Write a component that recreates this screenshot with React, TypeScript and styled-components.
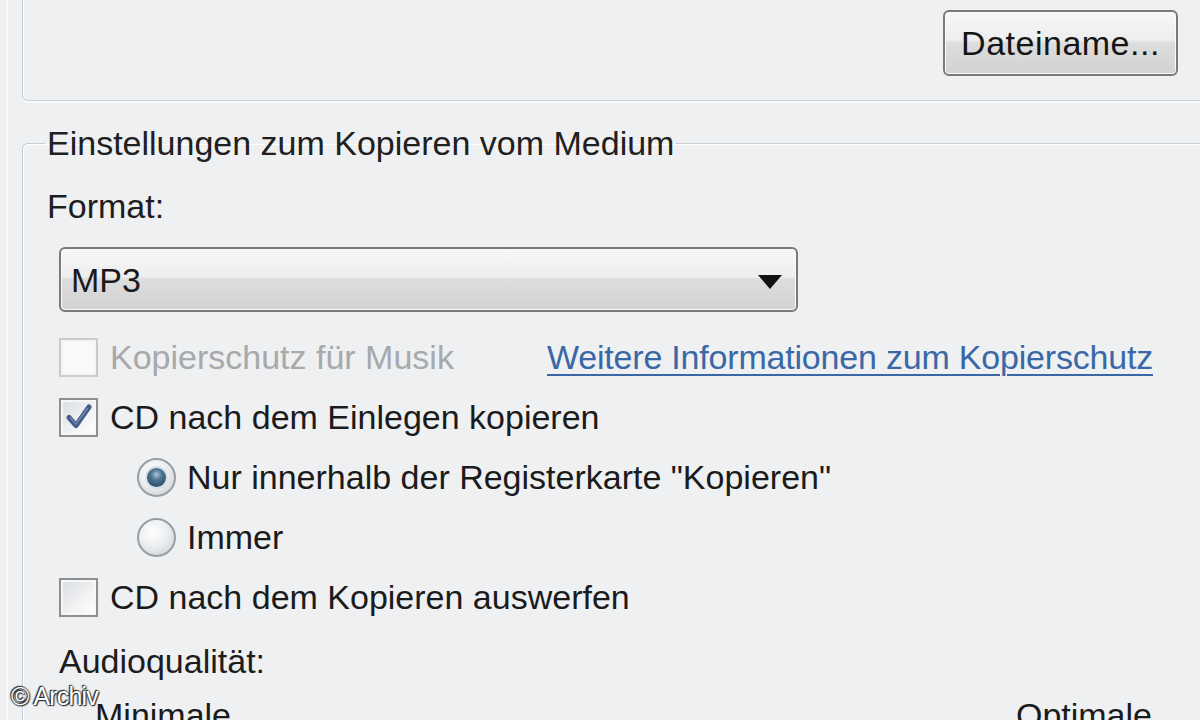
import React from "react";
import styled, { createGlobalStyle, css } from "styled-components";

const GlobalStyle = createGlobalStyle`
  html, body {
    margin: 0;
    padding: 0;
    background: #eef0f2;
  }
  body {
    font-family: "Liberation Sans", Arial, sans-serif;
    color: #1b1b1b;
  }
`;

const Page = styled.div`
  position: relative;
  width: 1200px;
  height: 720px;
  overflow: hidden;
  background: #eef0f2;
  box-sizing: border-box;
  padding-left: 22px;
  font-size: 34px;
  line-height: 40px;
`;

const EdgeLine = styled.div`
  position: absolute;
  left: 6px;
  top: 0;
  bottom: 0;
  width: 2px;
  background: #f8f9fa;
`;

const TopGroup = styled.div`
  height: 101px;
  box-sizing: border-box;
  border-left: 1px solid #c6ccd2;
  border-bottom: 1px solid #c6ccd2;
  border-bottom-left-radius: 6px;
  box-shadow: inset 1px 0 0 #ffffff, 0 2px 0 #fbfcfc;
  display: flex;
  justify-content: flex-end;
  align-items: flex-start;
  padding-top: 10px;
  padding-right: 22px;
`;

const glossy = css`
  background: linear-gradient(
    to bottom,
    #f7f7f7 0%,
    #eeeeee 45%,
    #dddddd 50%,
    #d2d2d2 100%
  );
  border: 2px solid #7a7a7a;
  border-radius: 6px;
  box-shadow: inset 0 0 0 1px #fbfbfb;
  box-sizing: border-box;
`;

const PushButton = styled.button`
  ${glossy};
  width: 235px;
  height: 66px;
  font-family: inherit;
  font-size: 34px;
  letter-spacing: 0.5px;
  color: #151515;
  padding: 0;
  text-align: center;
`;

const GroupBox = styled.fieldset`
  margin: 22px 0 0 0;
  padding: 0 0 0 22px;
  border: 1px solid #c6ccd2;
  border-right: none;
  border-bottom: none;
  border-top-left-radius: 6px;
  box-shadow: inset 1px 1px 0 #ffffff;
  min-width: 0;
  height: 640px;
`;

const Legend = styled.legend`
  padding: 0 2px;
  font-size: 34px;
  line-height: 40px;
  color: #202020;
`;

const Label = styled.div<{ $indent?: number }>`
  margin-left: ${(p) => p.$indent ?? 2}px;
  color: #1d1d1d;
`;

const Select = styled.div`
  ${glossy};
  margin: 21px 0 0 14px;
  width: 739px;
  height: 65px;
  display: flex;
  align-items: center;
  justify-content: space-between;
  padding: 0 14px 0 10px;
  color: #1a1a1a;
`;

const Arrow = styled.span`
  width: 0;
  height: 0;
  border-left: 12px solid transparent;
  border-right: 12px solid transparent;
  border-top: 14px solid #111111;
  margin-top: 4px;
`;

const List = styled.div`
  margin-top: 15px;
  display: flex;
  flex-direction: column;
`;

const Row = styled.div<{ $indent?: number }>`
  height: 60px;
  display: flex;
  align-items: center;
  margin-left: ${(p) => p.$indent ?? 14}px;
`;

const CheckPart = styled.div<{ $width?: number }>`
  display: flex;
  align-items: center;
  gap: 12px;
  ${(p) => (p.$width ? `flex: 0 0 ${p.$width}px;` : "")}
`;

const Box = styled.span<{ $disabled?: boolean }>`
  width: 39px;
  height: 39px;
  box-sizing: border-box;
  border: 2px solid ${(p) => (p.$disabled ? "#c9cbcd" : "#8d8f91")};
  background: ${(p) =>
    p.$disabled
      ? "#f9f9f9"
      : "linear-gradient(135deg, #d9dcdf 0%, #f2f3f4 60%, #ffffff 100%)"};
  box-shadow: inset 0 0 0 2px ${(p) => (p.$disabled ? "#f4f4f4" : "#f6f7f8")};
  display: flex;
  align-items: center;
  justify-content: center;
  flex: none;
`;

const Text = styled.span<{ $disabled?: boolean }>`
  color: ${(p) => (p.$disabled ? "#a7a9ab" : "#1b1b1b")};
  white-space: nowrap;
`;

const InfoLink = styled.a`
  color: #3a68a6;
  text-decoration: underline;
  text-decoration-thickness: 2px;
  text-underline-offset: 5px;
  letter-spacing: -0.2px;
  white-space: nowrap;
  cursor: pointer;
`;

const Radio = styled.span<{ $checked?: boolean }>`
  width: 39px;
  height: 39px;
  box-sizing: border-box;
  border-radius: 50%;
  border: 2px solid #9a9ea2;
  background: radial-gradient(
    circle at 40% 35%,
    #ffffff 0%,
    #eceef0 45%,
    #c9cdd1 100%
  );
  display: flex;
  align-items: center;
  justify-content: center;
  flex: none;
  &::after {
    content: "";
    display: ${(p) => (p.$checked ? "block" : "none")};
    width: 19px;
    height: 19px;
    border-radius: 50%;
    background: radial-gradient(
      circle at 50% 35%,
      #a8c4da 0%,
      #4d7593 35%,
      #1d3a52 100%
    );
    box-shadow: 0 0 0 2px #d7e0e8;
  }
`;

const RadioPart = styled.div`
  display: flex;
  align-items: center;
  gap: 11px;
`;

const Scale = styled.div`
  margin: 14px 48px 0 50px;
  display: flex;
  justify-content: space-between;
  color: #1b1b1b;
`;

const Watermark = styled.div`
  position: absolute;
  left: 11px;
  top: 681px;
  font-size: 25px;
  line-height: 30px;
  color: #ffffff;
  letter-spacing: -0.8px;
  text-shadow: 0 0 2px #222, 0 0 2px #222, 1px 1px 1px #333, -1px -1px 1px #333;
`;

const Check = () => (
  <svg width="30" height="30" viewBox="0 0 30 30" aria-hidden>
    <path
      d="M5 15.5 L12 23.5 L25 5"
      fill="none"
      stroke="#3f5b86"
      strokeWidth="5"
      strokeLinecap="round"
      strokeLinejoin="round"
    />
    <path
      d="M6.5 16 L12 22 L23.5 6.5"
      fill="none"
      stroke="#6f8bb3"
      strokeWidth="1.5"
      strokeLinecap="round"
      strokeLinejoin="round"
    />
  </svg>
);

const CheckRow = ({
  label,
  checked,
  disabled,
  width,
}: {
  label: string;
  checked?: boolean;
  disabled?: boolean;
  width?: number;
}) => (
  <CheckPart $width={width}>
    <Box $disabled={disabled}>{checked && <Check />}</Box>
    <Text $disabled={disabled}>{label}</Text>
  </CheckPart>
);

const RadioRow = ({ label, checked }: { label: string; checked?: boolean }) => (
  <Row $indent={92}>
    <RadioPart>
      <Radio $checked={checked} />
      <Text>{label}</Text>
    </RadioPart>
  </Row>
);

export default function App() {
  return (
    <Page>
      <GlobalStyle />
      <EdgeLine />
      <TopGroup>
        <PushButton>Dateiname...</PushButton>
      </TopGroup>
      <GroupBox>
        <Legend>Einstellungen zum Kopieren vom Medium</Legend>
        <Label style={{ marginTop: 23 }}>Format:</Label>
        <Select>
          <span>MP3</span>
          <Arrow />
        </Select>
        <List>
          <Row>
            <CheckRow label="Kopierschutz für Musik" disabled width={488} />
            <InfoLink>Weitere Informationen zum Kopierschutz</InfoLink>
          </Row>
          <Row>
            <CheckRow label="CD nach dem Einlegen kopieren" checked />
          </Row>
          <RadioRow label={'Nur innerhalb der Registerkarte "Kopieren"'} checked />
          <RadioRow label="Immer" />
          <Row>
            <CheckRow label="CD nach dem Kopieren auswerfen" />
          </Row>
        </List>
        <Label $indent={14} style={{ marginTop: 14 }}>
          Audioqualität:
        </Label>
        <Scale>
          <span>Minimale</span>
          <span>Optimale</span>
        </Scale>
      </GroupBox>
      <Watermark>© Archiv</Watermark>
    </Page>
  );
}
